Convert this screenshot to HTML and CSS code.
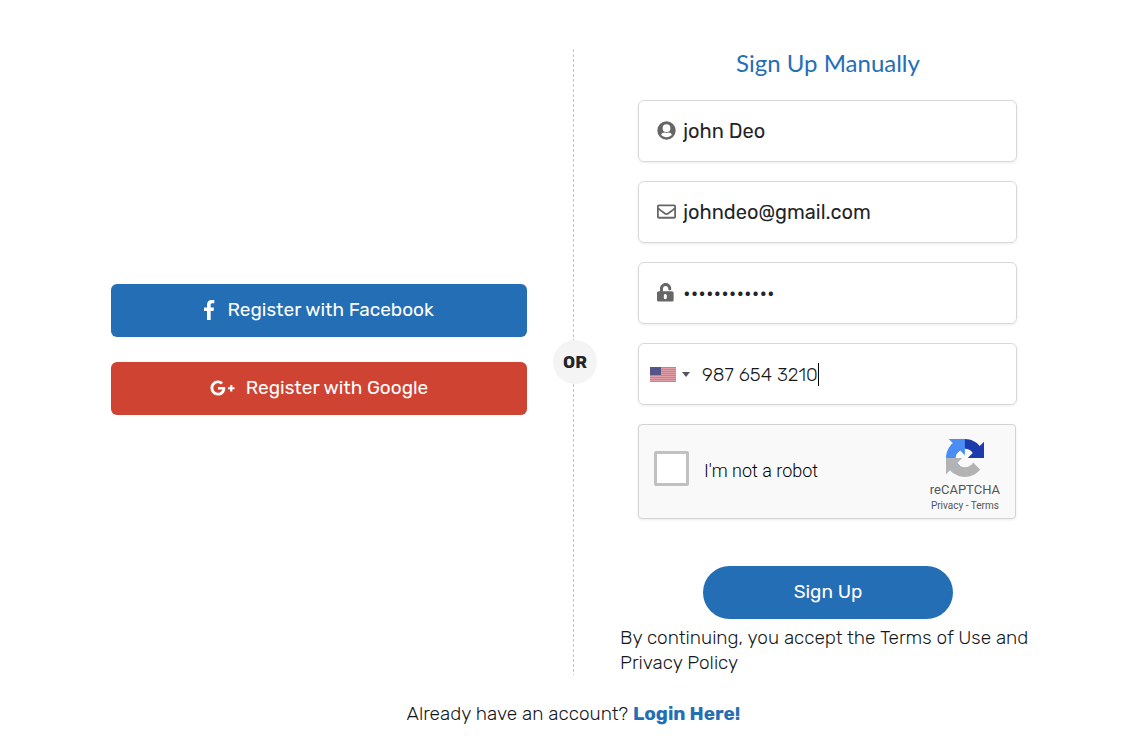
FILE: index.html
```html
<!DOCTYPE html>
<html lang="en">
<head>
<meta charset="utf-8">
<meta name="viewport" content="width=device-width, initial-scale=1">
<title>Sign Up</title>
<link rel="stylesheet" href="styles.css">
</head>
<body>
<main class="page">
  <div class="signup">
    <section class="social" aria-label="Social sign up">
      <button type="button" class="social-btn facebook">
        <svg class="icon-facebook" viewBox="0 0 264 512" aria-hidden="true"><path d="M76.7 512V283H0v-91h76.7v-71.7C76.7 42.4 124.3 0 193.8 0c33.3 0 61.9 2.5 70.2 3.6V85h-48.2c-37.8 0-45.1 18-45.1 44.3V192H256l-11.7 91h-73.6v229z"/></svg>
        <span>Register with Facebook</span>
      </button>
      <button type="button" class="social-btn google">
        <svg class="icon-google" viewBox="0 0 640 512" aria-hidden="true"><path d="M386.061 228.496c1.834 9.692 3.143 19.384 3.143 31.956C389.204 370.205 315.599 448 204.8 448c-106.084 0-192-85.915-192-192s85.916-192 192-192c51.864 0 95.083 18.859 128.611 50.292l-52.126 50.03c-14.145-13.621-39.028-29.599-76.485-29.599-65.484 0-118.92 54.221-118.92 121.277 0 67.056 53.436 121.277 118.92 121.277 75.961 0 104.513-54.745 108.965-82.773H204.8v-66.009h181.261zm185.406 6.437V179.2h-56.001v55.733h-55.733v56.001h55.733v55.733h56.001v-55.733H627.2v-56.001h-55.733z"/></svg>
        <span>Register with Google</span>
      </button>
    </section>

    <div class="divider"><span class="or">OR</span></div>

    <form class="manual">
      <h1 class="title">Sign Up Manually</h1>
      <div class="fields">
        <label class="field">
          <svg class="field-icon" viewBox="0 0 512 512" aria-hidden="true"><path fill-rule="evenodd" d="M256 8a248 248 0 1 0 0 496 248 248 0 1 0 0-496zm0 80a104 104 0 1 1 0 208 104 104 0 1 1 0-208zm0 352c-59 0-111-26-146-68 19-35 56-59 98-59 10 0 22 8 48 8s38-8 48-8c42 0 79 24 98 59-35 42-87 68-146 68z"/></svg>
          <input class="input" type="text" value="john Deo" aria-label="Name">
        </label>
        <label class="field">
          <svg class="field-icon" viewBox="0 0 512 512" aria-hidden="true"><path d="M464 64H48C21.49 64 0 85.49 0 112v288c0 26.51 21.49 48 48 48h416c26.51 0 48-21.49 48-48V112c0-26.51-21.49-48-48-48zm0 48v40.805c-22.422 18.259-58.168 46.651-134.587 106.49-16.841 13.247-50.201 45.072-73.413 44.701-23.208.375-56.579-31.459-73.413-44.701C106.18 199.465 70.425 171.067 48 152.805V112h416zM48 400V214.398c22.914 18.251 55.409 43.862 104.938 82.646 21.857 17.205 60.134 55.186 103.062 54.955 42.717.231 80.509-37.199 103.053-54.947 49.528-38.783 82.032-64.401 104.947-82.653V400H48z"/></svg>
          <input class="input" type="email" value="johndeo@gmail.com" aria-label="Email">
        </label>
        <label class="field">
          <svg class="field-icon" viewBox="0 0 512 512" aria-hidden="true"><path fill-rule="evenodd" d="M48 224h32v-72C80 68 148 0 232 0s152 69 152 153v15c0 13-11 24-24 24h-32c-13 0-24-11-24-24v-16c0-40-32-73-72-73s-72 33-72 73v72h240c27 0 48 21 48 48v192c0 17-15 32-32 32H32c-17 0-32-15-32-32V272c0-27 21-48 48-48zm176 72c-22 0-40 18-40 40v64c0 22 18 40 40 40s40-18 40-40v-64c0-22-18-40-40-40z"/></svg>
          <input class="input" type="password" value="abcdefghijkl" aria-label="Password">
        </label>
        <div class="field phone">
          <button type="button" class="country" aria-label="United States">
            <svg class="flag" viewBox="0 0 26 15" aria-hidden="true"><path fill="#e2a0a8" d="M0 0h26v15H0z"/><path fill="#d67988" d="M0 0h26v1H0zM0 2h26v1H0zM0 4h26v1H0zM0 6h26v1H0zM0 8h26v1H0zM0 10h26v1H0zM0 12h26v1H0zM0 14h26v1H0z"/><path fill="#54568a" d="M0 0h11v8H0z"/></svg>
            <svg class="arrow" viewBox="0 0 8 5" aria-hidden="true"><path d="M0 0h8L4 5z"/></svg>
          </button>
          <input class="input tel" type="tel" value="987 654 3210" aria-label="Phone number">
          <span class="caret"></span>
        </div>
        <div class="captcha">
          <label class="robot"><input class="tick" type="checkbox"><span class="robot-text">I'm not a robot</span></label>
          <div class="brand">
            <svg class="brand-logo" viewBox="0 0 64 64" aria-hidden="true"><path fill="#1c3aa9" d="M64 31.955l-.033-1.37V4.687l-7.16 7.16C50.948 4.674 42.033.093 32.05.093c-10.4 0-19.622 4.96-25.458 12.64l11.736 11.86a15.55 15.55 0 0 1 4.754-5.334c2.05-1.6 4.952-2.906 8.968-2.906.485 0 .86.057 1.135.163 4.976.393 9.288 3.14 11.828 7.124l-8.307 8.307L64 31.953"/><path fill="#4b8df5" d="M31.862.094l-1.37.033H4.594l7.16 7.16C4.58 13.147 0 22.06 0 32.046c0 10.4 4.96 19.622 12.64 25.458L24.5 45.768a15.55 15.55 0 0 1-5.334-4.754c-1.6-2.05-2.906-4.952-2.906-8.968 0-.485.057-.86.163-1.135.393-4.976 3.14-9.288 7.124-11.828l8.307 8.307L31.86.095"/><path fill="#b3b3b3" d="M.001 32.045l.033 1.37v25.898l7.16-7.16c5.86 7.173 14.774 11.754 24.76 11.754 10.4 0 19.622-4.96 25.458-12.64l-11.736-11.86a15.55 15.55 0 0 1-4.754 5.334c-2.05 1.6-4.952 2.906-8.968 2.906-.485 0-.86-.057-1.135-.163-4.976-.393-9.288-3.14-11.828-7.124l8.307-8.307c-10.522.04-22.4.066-27.295-.005"/></svg>
            <span class="brand-name">reCAPTCHA</span>
            <span class="brand-links"><a href="#">Privacy</a> - <a href="#">Terms</a></span>
          </div>
        </div>
      </div>
      <button type="submit" class="submit">Sign Up</button>
      <p class="terms">By continuing, you accept the Terms of Use and Privacy Policy</p>
    </form>
  </div>
  <p class="login">Already have an account? <a class="login-link" href="#">Login Here!</a></p>
</main>
</body>
</html>
```
FILE: styles.css
```css
* {
  box-sizing: border-box;
}

body {
  margin: 0;
  background: #fff;
  color: #15181b;
  font-family: Rubik, Roboto, sans-serif;
  font-size: 19px;
  font-weight: 300;
  line-height: 25px;
}

button,
input {
  font: inherit;
}

a {
  color: inherit;
  text-decoration: none;
}

.page {
  padding: 49px 106px 26px 111px;
}

.signup {
  display: grid;
  grid-template-columns: minmax(0, 1fr) 93px minmax(0, 1fr);
}

.social {
  display: flex;
  flex-direction: column;
  justify-content: center;
  gap: 25px;
  padding-bottom: 25px;
}

.social-btn {
  display: flex;
  align-items: center;
  justify-content: center;
  height: 53px;
  padding: 0 0 2px;
  border: 0;
  border-radius: 6px;
  color: #fff;
  font-weight: 400;
}

.social-btn svg {
  height: 20px;
  fill: currentColor;
}

.icon-facebook {
  margin-right: 13px;
}

.icon-google {
  margin-right: 11px;
}

.facebook {
  background: #246eb5;
}

.google {
  background: #cf4332;
}

.divider {
  display: grid;
  place-items: center;
  padding-left: 3px;
  background: linear-gradient(#c6c6c6 60%, transparent 60%) 46px top / 1px 5px repeat-y;
}

.or {
  display: grid;
  place-items: center;
  width: 44px;
  height: 44px;
  border-radius: 50%;
  background: #f4f4f4;
  color: #212529;
  font-size: 17px;
  font-weight: 700;
}

.manual {
  display: flex;
  flex-direction: column;
}

.title {
  margin: 0 0 23px;
  color: #246eb5;
  font-family: Lato, sans-serif;
  font-size: 24px;
  font-weight: 400;
  line-height: 28px;
  text-align: center;
}

.fields {
  display: flex;
  flex-direction: column;
  gap: 19px;
  padding: 0 19px 0 18px;
}

.field {
  display: flex;
  align-items: center;
  gap: 7px;
  height: 62px;
  padding: 0 18px 1px;
  border: 1px solid #d8d8d8;
  border-radius: 6px;
  box-shadow: 0 1px 3px rgba(0, 0, 0, 0.08);
}

.field-icon {
  flex: none;
  width: 19px;
  height: 19px;
  fill: #666;
}

.input {
  flex: 1;
  min-width: 0;
  padding: 2px 0 0;
  border: 0;
  outline: 0;
  background: none;
  color: #212529;
  font-size: 20px;
  font-weight: 400;
}

.phone {
  gap: 0;
  padding: 0 11px;
}

.tel {
  flex: none;
  padding: 0;
  field-sizing: content;
  color: #15181b;
  font-size: 19px;
  font-weight: 300;
}

.caret {
  width: 1px;
  height: 23px;
  background: #000;
}

.country {
  display: flex;
  align-items: center;
  gap: 6px;
  margin-right: 12px;
  padding: 0;
  border: 0;
  background: none;
}

.flag {
  width: 26px;
  height: 15px;
}

.arrow {
  width: 8px;
  height: 5px;
  fill: #555;
}

.captcha {
  display: flex;
  align-items: center;
  justify-content: space-between;
  height: 95px;
  margin-right: 1px;
  padding: 0 15px;
  border: 1px solid #d3d3d3;
  border-radius: 4px;
  background: #f9f9f9;
  box-shadow: 0 1px 3px rgba(0, 0, 0, 0.08);
  font-family: Roboto, sans-serif;
  font-weight: 400;
}

.robot {
  display: flex;
  align-items: center;
  gap: 15px;
  padding-bottom: 6px;
  color: #000;
  font-size: 18px;
  font-weight: 300;
}

.robot-text {
  padding-top: 4px;
}

.tick {
  appearance: none;
  width: 35px;
  height: 35px;
  margin: 0;
  border: 3px solid #c1c1c1;
  border-radius: 2px;
  background: #fff;
}

.brand {
  display: flex;
  flex-direction: column;
  align-items: center;
  padding-top: 8px;
  color: #555;
}

.brand-logo {
  width: 38px;
  height: 38px;
  margin-bottom: 4px;
}

.brand-name {
  font-size: 13px;
  line-height: 17px;
}

.brand-links {
  font-size: 10px;
  line-height: 15px;
}

.submit {
  align-self: center;
  width: 250px;
  height: 53px;
  margin: 47px 0 6px;
  padding: 0 0 2px;
  border: 0;
  border-radius: 27px;
  background: #246eb5;
  color: #fff;
  font-weight: 400;
}

.terms {
  margin: 0;
}

.login {
  margin: 26px 0 0;
  text-align: center;
}

.login-link {
  color: #246eb5;
  font-weight: 700;
}
```
